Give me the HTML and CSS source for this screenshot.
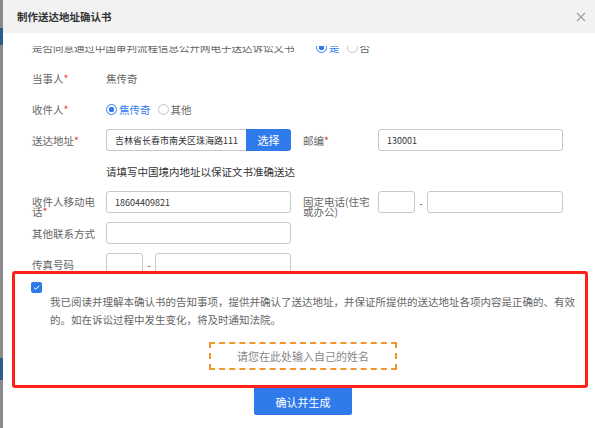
FILE: index.html
```html
<!DOCTYPE html>
<html lang="zh-CN">
<head>
<meta charset="utf-8">
<title>制作送达地址确认书</title>
<link rel="stylesheet" href="styles.css">
</head>
<body>
<div class="strip"></div>
<div class="dialog">
  <div class="head">
    <span class="title">制作送达地址确认书</span>
    <svg class="close" width="10" height="10" viewBox="0 0 10 10"><path d="M1 1L9 9M9 1L1 9" stroke="#a0a0a0" stroke-width="1.2" fill="none"/></svg>
  </div>
  <div class="body">
    <div class="scroll">
      <div class="form">
        <div class="row">
          <span class="lab-long">是否同意通过中国审判流程信息公开网电子送达诉讼文书</span>
          <span class="radio on"></span><span class="opt on-text">是</span>
          <span class="radio"></span><span class="opt">否</span>
        </div>
        <div class="row">
          <span class="lab">当事人<i>*</i></span>
          <span class="val">焦传奇</span>
        </div>
        <div class="row">
          <span class="lab">收件人<i>*</i></span>
          <span class="radio on"></span><span class="opt on-text">焦传奇</span>
          <span class="radio"></span><span class="opt">其他</span>
        </div>
        <div class="row">
          <span class="lab">送达地址<i>*</i></span>
          <div class="field addr">
            <input class="inp" value="吉林省长春市南关区珠海路111">
            <span class="btn-pick">选择</span>
          </div>
          <span class="lab2">邮编<i>*</i></span>
          <input class="inp field" value="130001">
        </div>
        <div class="row">
          <span class="hint">请填写中国境内地址以保证文书准确送达</span>
        </div>
        <div class="row">
          <span class="lab wrap">收件人移动电话<i>*</i></span>
          <input class="inp field" value="18604409821">
          <span class="lab2 wrap">固定电话(住宅或办公)</span>
          <div class="field split">
            <input class="inp s1" value="">
            <span class="dash">-</span>
            <input class="inp s2" value="">
          </div>
        </div>
        <div class="row">
          <span class="lab">其他联系方式</span>
          <input class="inp field" value="">
        </div>
        <div class="row">
          <span class="lab">传真号码</span>
          <div class="field split">
            <input class="inp s1" value="">
            <span class="dash">-</span>
            <input class="inp s2" value="">
          </div>
        </div>
      </div>
    </div>
    <div class="confirm">
      <span class="check"><svg width="11" height="11" viewBox="0 0 11 11"><path d="M3 5.6L4.8 7.3L8.2 3.8" stroke="#fff" stroke-width="1" fill="none"/></svg></span>
      <p class="notice">我已阅读并理解本确认书的告知事项，提供并确认了送达地址，并保证所提供的送达地址各项内容是正确的、有效的。如在诉讼过程中发生变化，将及时通知法院。</p>
      <div class="sign">请您在此处输入自己的姓名</div>
    </div>
    <div class="foot">
      <span class="btn-ok">确认并生成</span>
    </div>
  </div>
</div>
</body>
</html>
```

FILE: styles.css
```css
* { box-sizing: border-box; }
html, body { margin: 0; padding: 0; }
body {
  width: 595px;
  height: 428px;
  overflow: hidden;
  display: flex;
  font-family: "Noto Sans CJK SC", "Liberation Sans", sans-serif;
  font-size: 10.5px;
  color: #666;
  background: #fff;
}
.strip {
  width: 3px;
  flex: none;
  background: linear-gradient(to bottom, #8a8a8a 0, #8a8a8a 28px, #2c5d8f 28px, #2c5d8f 45px, #8a8a8a 45px, #8a8a8a 358px, #2c5d8f 358px, #2c5d8f 380px, #8a8a8a 380px);
}
.dialog {
  flex: 1;
  background: #fff;
  display: flex;
  flex-direction: column;
}
.head {
  height: 33px;
  flex: none;
  background: #f2f2f2;
  display: flex;
  align-items: center;
  justify-content: space-between;
  padding: 0 9px 0 14px;
}
.title {
  font-weight: bold;
  color: #333;
  font-size: 10.5px;
}
.close { display: block; }
.body {
  padding-top: 13px;
  display: flex;
  flex-direction: column;
}
.scroll {
  height: 225px;
  overflow: hidden;
}
.form {
  margin-top: -10px;
  padding-left: 29px;
  display: flex;
  flex-direction: column;
  gap: 9px;
}
.row {
  height: 22px;
  display: flex;
  align-items: center;
  white-space: nowrap;
}
.row i { color: #e4393c; font-style: normal; }
.lab-long { width: 284px; }
.lab { width: 68px; margin-right: 6px; flex: none; }
.lab2 { width: 72px; margin-left: 12px; margin-right: 3px; flex: none; }
.wrap {
  white-space: normal;
  line-height: 10px;
  align-self: flex-start;
  padding-top: 6px;
}
.val { color: #666; }
.hint { margin-left: 74px; color: #333; }
.radio {
  width: 11px;
  height: 11px;
  border-radius: 50%;
  border: 1px solid #c4c4c4;
  background: #fff;
  margin-right: 2px;
  flex: none;
}
.radio.on {
  border: 1px solid #2f7bec;
  background: radial-gradient(circle, #2f7bec 0, #2f7bec 2.6px, #fff 3px);
}
.opt { margin-right: 7px; }
.on-text { color: #2f7bec; }
.field { width: 185px; flex: none; }
.inp {
  height: 22px;
  border: 1px solid #c8c8c8;
  border-radius: 3px;
  padding: 0 2px 0 8px;
  font-family: "Noto Sans CJK SC", "Liberation Sans", sans-serif;
  font-size: 9px;
  color: #333;
  background: #fff;
  outline: none;
  margin: 0;
}
.addr { display: flex; height: 22px; }
.addr .inp {
  flex: 1;
  min-width: 0;
  border-right: none;
  border-radius: 3px 0 0 3px;
}
.btn-pick {
  width: 45px;
  flex: none;
  background: #2f7bec;
  color: #fff;
  border-radius: 0 3px 3px 0;
  display: flex;
  align-items: center;
  justify-content: center;
  font-size: 11px;
}
.split { display: flex; align-items: center; }
.split .s1 { width: 37px; }
.split .s2 { flex: 1; min-width: 0; }
.dash { width: 12px; text-align: center; color: #666; }
.confirm {
  margin: 0 7px 0 9px;
  border: 3px solid #ff2216;
  border-radius: 3px;
  padding: 8px 0 15px 0;
  display: flex;
  flex-direction: column;
}
.check {
  width: 11px;
  height: 11px;
  margin-left: 16px;
  background: #2f7bec;
  border-radius: 2px;
  display: block;
}
.check svg { display: block; }
.notice {
  margin: 0 0 0 35px;
  width: 530px;
  line-height: 18px;
  font-size: 10.5px;
  color: #666;
}
.sign {
  margin: 13px 0 0 194px;
  width: 188px;
  height: 28px;
  border: 2px dashed #f0962c;
  display: flex;
  align-items: center;
  justify-content: center;
  color: #888;
  font-size: 11px;
}
.foot {
  display: flex;
  padding-left: 251px;
}
.btn-ok {
  width: 98px;
  height: 27px;
  background: #2f7bec;
  color: #fff;
  border-radius: 0 0 2px 2px;
  display: flex;
  align-items: center;
  justify-content: center;
  font-size: 11px;
}
```
